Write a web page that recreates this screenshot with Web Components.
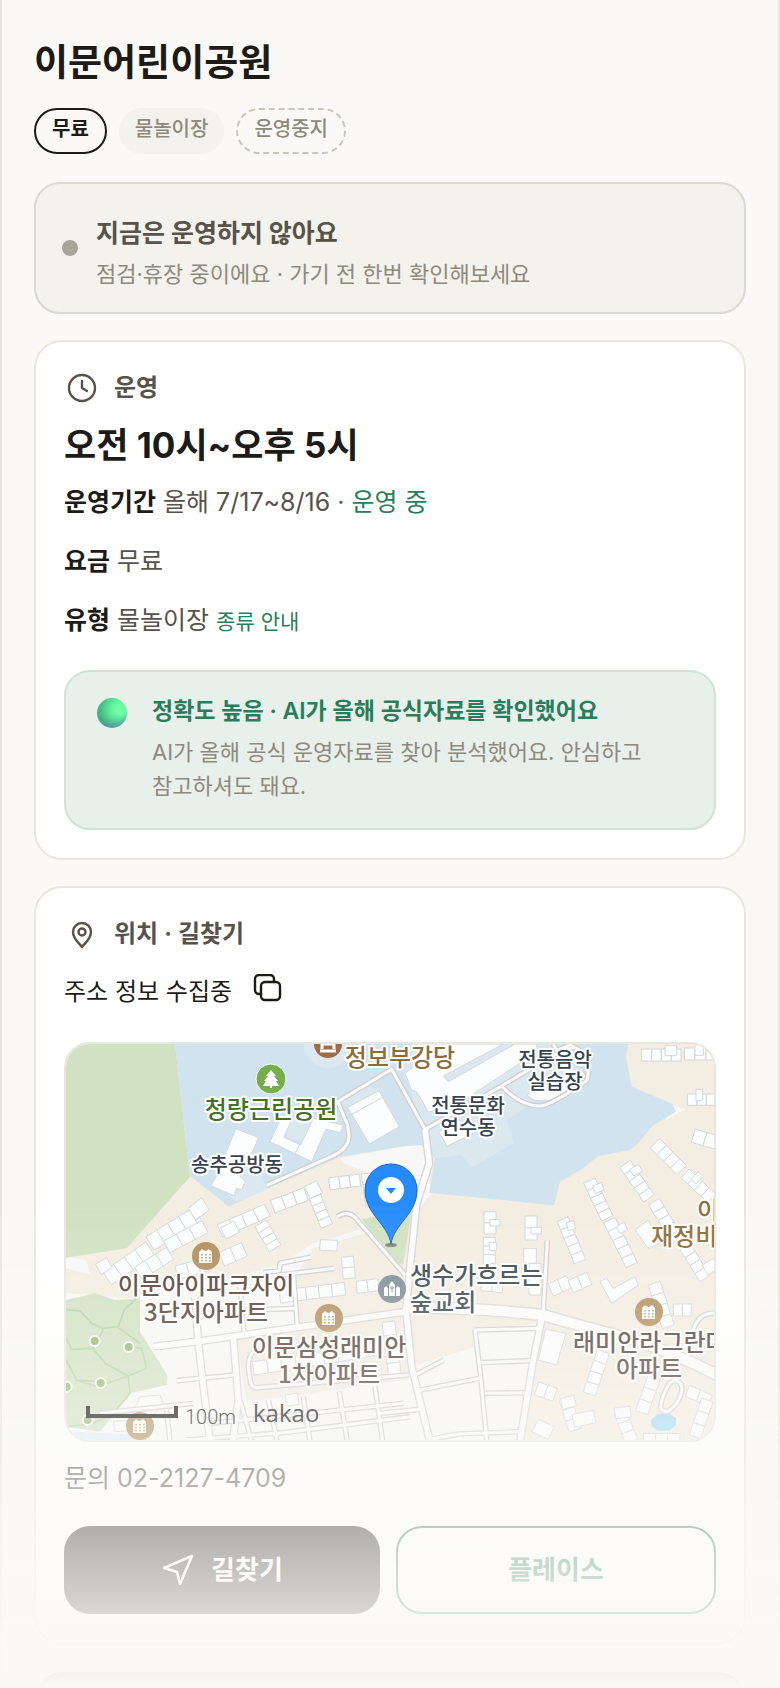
<!DOCTYPE html>
<html lang="ko">
<head>
<meta charset="utf-8">
<meta name="viewport" content="width=device-width, initial-scale=1">
<title>이문어린이공원</title>
<style>
    :root {
        --bg: #faf9f5;
        --ink: #1c1b17;
        --ink-soft: #57534a;
        --ink-mute: #8f897c;
        --line: #e8e6df;
        --green: #2a7d5a;
    }

    body {
        margin: 0;
        background: var(--bg);
        color: var(--ink);
        font-family: Inter, "Noto Sans CJK KR", sans-serif;
        font-size: 24px;
        line-height: 36px;
        word-break: keep-all;
    }
</style>
</head>
<body>
<park-page>
    <h1 slot="title">이문어린이공원</h1>
    <park-chip slot="chips" kind="free">무료</park-chip>
    <park-chip slot="chips">물놀이장</park-chip>
    <park-chip slot="chips" kind="closed">운영중지</park-chip>

    <status-notice>
        <span slot="title">지금은 운영하지 않아요</span>
        점검·휴장 중이에요 · 가기 전 한번 확인해보세요
    </status-notice>

    <info-card icon="clock" heading="운영">
        <hours-info hours="오전 10시~오후 5시">
            <info-row label="운영기간">올해 7/17~8/16 <info-accent>· 운영 중</info-accent></info-row>
            <info-row label="요금">무료</info-row>
            <info-row label="유형">물놀이장 <info-link href="#types">종류 안내</info-link></info-row>
        </hours-info>
        <accuracy-note>
            <span slot="title">정확도 높음 · AI가 올해 공식자료를 확인했어요</span>
            AI가 올해 공식 운영자료를 찾아 분석했어요. 안심하고 참고하셔도 돼요.
        </accuracy-note>
    </info-card>

    <info-card icon="pin" heading="위치 · 길찾기">
        <copy-line>주소 정보 수집중</copy-line>
        <park-map></park-map>
        <contact-line phone="02-2127-4709"></contact-line>
        <route-actions></route-actions>
    </info-card>

    <dark-panel></dark-panel>
</park-page>

<script>
class ParkPage extends HTMLElement {
    constructor() {
        super();
        this.attachShadow({ mode: 'open' });
        this.shadowRoot.innerHTML = `
            <style>
                :host {
                    display: block;
                    box-sizing: border-box;
                    height: 100vh;
                    overflow: hidden;
                    padding: 41px 32px 0;
                    border: solid var(--line);
                    border-width: 0 2px;
                }

                ::slotted(h1) {
                    margin: 0;
                    font-size: 37px;
                    line-height: 44px;
                    font-weight: 700;
                }

                .chips {
                    display: flex;
                    gap: 12px;
                    margin: 23px 0 28px;
                }

                main {
                    display: flex;
                    flex-direction: column;
                    gap: 26px;
                }

                .fade {
                    position: fixed;
                    left: 0;
                    right: 0;
                    bottom: 0;
                    height: 29vh;
                    background: linear-gradient(rgba(250, 249, 245, 0), #faf9f5);
                    pointer-events: none;
                }
            </style>
            <header>
                <slot name="title"></slot>
                <div class="chips"><slot name="chips"></slot></div>
            </header>
            <main><slot></slot></main>
            <div class="fade"></div>
        `;
    }
}

class ParkChip extends HTMLElement {
    constructor() {
        super();
        this.attachShadow({ mode: 'open' });
        this.shadowRoot.innerHTML = `
            <style>
                :host {
                    display: block;
                    box-sizing: border-box;
                    height: 46px;
                    padding: 6px 16px 0;
                    border-radius: 23px;
                    background: #f3f2ed;
                    color: var(--ink-mute);
                    font-size: 20px;
                    line-height: 30px;
                    font-weight: 500;
                }

                :host([kind]) {
                    padding-top: 4px;
                    background: none;
                    border: 2px solid var(--ink);
                }

                :host([kind="free"]) {
                    color: var(--ink);
                    font-weight: 700;
                }

                :host([kind="closed"]) {
                    border: 2px dashed #c9c5b9;
                }
            </style>
            <slot></slot>
        `;
    }
}

class StatusNotice extends HTMLElement {
    constructor() {
        super();
        this.attachShadow({ mode: 'open' });
        this.shadowRoot.innerHTML = `
            <style>
                :host {
                    display: flex;
                    align-items: center;
                    gap: 18px;
                    padding: 0 26px;
                    border: 2px solid #dadad0;
                    border-radius: 26px;
                    background: #f3f2ed;
                }

                i {
                    flex: none;
                    width: 16px;
                    height: 16px;
                    border-radius: 50%;
                    background: #a8a498;
                }

                .text {
                    padding: 31px 0 20px;
                    color: var(--ink-mute);
                    font-size: 22px;
                }

                .title {
                    margin-bottom: 5px;
                    color: var(--ink-soft);
                    font-size: 25px;
                    font-weight: 700;
                }
            </style>
            <i></i>
            <div class="text">
                <div class="title"><slot name="title"></slot></div>
                <slot></slot>
            </div>
        `;
    }
}

const ICONS = {
    clock: '<circle cx="18" cy="18" r="13"/><path d="M18 11v7l5 3"/>',
    pin: '<path d="M18 31c-3-4-9-8-9-15a9 9 0 0 1 18 0c0 7-6 11-9 15z"/><circle cx="18" cy="16" r="3.5"/>'
};

class InfoCard extends HTMLElement {
    constructor() {
        super();
        this.attachShadow({ mode: 'open' });
        this.shadowRoot.innerHTML = `
            <style>
                :host {
                    display: block;
                    padding: 28px;
                    border: 2px solid var(--line);
                    border-radius: 28px;
                    background: #fff;
                }

                h2 {
                    display: flex;
                    gap: 14px;
                    margin: 0;
                    color: var(--ink-soft);
                    font-size: 24px;
                    font-weight: 600;
                }

                svg {
                    width: 36px;
                    height: 36px;
                    fill: none;
                    stroke: currentColor;
                    stroke-width: 2.4;
                    stroke-linecap: round;
                    stroke-linejoin: round;
                }
            </style>
            <h2><svg viewBox="0 0 36 36" aria-hidden="true"></svg><span></span></h2>
            <slot></slot>
        `;
    }

    connectedCallback() {
        this.shadowRoot.querySelector('svg').innerHTML = ICONS[this.getAttribute('icon')];
        this.shadowRoot.querySelector('span').textContent = this.getAttribute('heading');
    }
}

class HoursInfo extends HTMLElement {
    constructor() {
        super();
        this.attachShadow({ mode: 'open' });
        this.shadowRoot.innerHTML = `
            <style>
                :host {
                    display: block;
                }

                p {
                    margin: 17px 0;
                    font-size: 35px;
                    line-height: 44px;
                    font-weight: 700;
                }

                .rows {
                    display: flex;
                    flex-direction: column;
                    gap: 23px;
                }
            </style>
            <p></p>
            <div class="rows"><slot></slot></div>
        `;
    }

    connectedCallback() {
        this.shadowRoot.querySelector('p').textContent = this.getAttribute('hours');
    }
}

class InfoRow extends HTMLElement {
    constructor() {
        super();
        this.attachShadow({ mode: 'open' });
        this.shadowRoot.innerHTML = `
            <style>
                :host {
                    display: block;
                    color: var(--ink-soft);
                    font-size: 25px;
                }

                b {
                    color: var(--ink);
                    font-weight: 600;
                }
            </style>
            <b></b> <slot></slot>
        `;
    }

    connectedCallback() {
        this.shadowRoot.querySelector('b').textContent = this.getAttribute('label');
    }
}

class InfoAccent extends HTMLElement {
    constructor() {
        super();
        this.attachShadow({ mode: 'open' });
        this.shadowRoot.innerHTML = `
            <style>
                :host {
                    color: var(--green);
                }
            </style>
            <slot></slot>
        `;
    }
}

class InfoLink extends HTMLElement {
    constructor() {
        super();
        this.attachShadow({ mode: 'open' });
        this.shadowRoot.innerHTML = `
            <style>
                a {
                    color: var(--green);
                    font-size: 21px;
                    line-height: 30px;
                    text-decoration: none;
                }
            </style>
            <a><slot></slot></a>
        `;
    }

    connectedCallback() {
        this.shadowRoot.querySelector('a').href = this.getAttribute('href');
    }
}

class AccuracyNote extends HTMLElement {
    constructor() {
        super();
        this.attachShadow({ mode: 'open' });
        this.shadowRoot.innerHTML = `
            <style>
                :host {
                    display: flex;
                    gap: 20px;
                    margin-top: 32px;
                    padding: 22px 26px 25px;
                    border: 2px solid #cfe3d8;
                    border-radius: 26px;
                    background: #e8f0eb;
                }

                .orb {
                    flex: none;
                    width: 30px;
                    height: 30px;
                    margin: 4px 5px;
                    border-radius: 50%;
                    background:
                        radial-gradient(circle at 50% -20%, transparent 66%, rgba(90, 130, 190, 0.75) 100%),
                        radial-gradient(circle at 75% 38%, #70ffa4 0 12%, #5cee9a 32%, #48b680 68%, #3fa97a);
                }

                .text {
                    color: var(--ink-mute);
                    font-size: 22px;
                    line-height: 34px;
                }

                .title {
                    margin-bottom: 7px;
                    color: var(--green);
                    font-size: 23px;
                    font-weight: 600;
                }
            </style>
            <div class="orb"></div>
            <div class="text">
                <div class="title"><slot name="title"></slot></div>
                <slot></slot>
            </div>
        `;
    }
}

class CopyLine extends HTMLElement {
    constructor() {
        super();
        this.attachShadow({ mode: 'open' });
        this.shadowRoot.innerHTML = `
            <style>
                :host {
                    display: flex;
                    gap: 20px;
                    margin: 22px 0 32px;
                }

                button {
                    height: 28px;
                    padding: 0;
                    border: 0;
                    background: none;
                    color: var(--ink);
                    cursor: pointer;
                }

                svg {
                    display: block;
                    fill: none;
                    stroke: currentColor;
                    stroke-width: 2.4;
                    stroke-linejoin: round;
                    stroke-linecap: round;
                }
            </style>
            <span><slot></slot></span>
            <button type="button" aria-label="주소 복사">
                <svg width="32" height="28" viewBox="0 0 32 28">
                    <rect x="9" y="8" width="19" height="18" rx="4"/>
                    <path d="M9 20H7a4 4 0 0 1-4-4V5a4 4 0 0 1 4-4h11a4 4 0 0 1 4 4v3"/>
                </svg>
            </button>
        `;
    }
}

class ContactLine extends HTMLElement {
    constructor() {
        super();
        this.attachShadow({ mode: 'open' });
        this.shadowRoot.innerHTML = `
            <style>
                :host {
                    display: block;
                    margin: 18px 0 30px;
                    color: var(--ink-soft);
                    font-size: 25px;
                }

                a {
                    color: inherit;
                    text-decoration: none;
                }
            </style>
            문의 <a></a>
        `;
    }

    connectedCallback() {
        const link = this.shadowRoot.querySelector('a');
        link.textContent = this.getAttribute('phone');
        link.href = 'tel:' + this.getAttribute('phone');
    }
}

class RouteActions extends HTMLElement {
    constructor() {
        super();
        this.attachShadow({ mode: 'open' });
        this.shadowRoot.innerHTML = `
            <style>
                :host {
                    display: flex;
                    gap: 16px;
                }

                button {
                    display: flex;
                    flex: 1;
                    align-items: center;
                    justify-content: center;
                    gap: 16px;
                    height: 88px;
                    padding: 0;
                    border: 0;
                    border-radius: 26px;
                    background: var(--ink);
                    color: #fff;
                    font: 700 26px/36px Inter, "Noto Sans CJK KR", sans-serif;
                    cursor: pointer;
                }

                .place {
                    border: 2px solid var(--green);
                    background: none;
                    color: var(--green);
                }

                svg {
                    fill: none;
                    stroke: currentColor;
                    stroke-width: 2.6;
                    stroke-linejoin: round;
                }
            </style>
            <button type="button">
                <svg width="34" height="34" viewBox="0 0 34 34" aria-hidden="true"><path d="M31 3L3 15l13 4 3 12z"/></svg>
                길찾기
            </button>
            <button type="button" class="place">플레이스</button>
        `;
    }
}

class DarkPanel extends HTMLElement {
    constructor() {
        super();
        this.attachShadow({ mode: 'open' });
        this.shadowRoot.innerHTML = `
            <style>
                :host {
                    display: block;
                    flex: none;
                    height: 160px;
                    margin-top: 2px;
                    border-radius: 28px;
                    background: var(--ink);
                }
            </style>
        `;
    }
}

// rows of houses: x1, y1, x2, y2, depth, number of houses
const HOUSES = [
    [172, 745, 300, 655, 46, 4], [300, 640, 430, 560, 46, 4], [265, 730, 360, 670, 42, 3], [350, 650, 465, 590, 40, 3],
    [510, 602, 618, 556, 40, 3], [632, 580, 675, 655, 40, 4], [618, 556, 652, 540, 40, 1], [668, 530, 768, 492, 40, 3],
    [772, 488, 808, 470, 40, 1], [795, 500, 830, 588, 36, 4], [838, 462, 930, 450, 36, 3], [952, 430, 965, 525, 36, 3],
    [515, 688, 583, 658, 44, 2], [520, 610, 560, 590, 38, 1], [380, 728, 480, 700, 40, 3], [690, 800, 885, 776, 38, 5],
    [892, 680, 898, 745, 36, 2], [920, 772, 985, 764, 36, 2], [810, 645, 862, 647, 32, 1], [1015, 875, 1035, 1040, 38, 4],
    [610, 1015, 780, 990, 40, 4], [780, 990, 990, 955, 38, 5], [708, 1112, 745, 1106, 34, 1], [145, 718, 178, 698, 34, 1],
    [1775, 75, 1893, 75, 36, 4], [1845, 62, 1880, 62, 30, 1], [1903, 72, 2000, 72, 36, 3], [1935, 60, 1960, 60, 32, 1],
    [1912, 209, 1998, 209, 34, 3], [1938, 195, 1958, 195, 34, 1], [1930, 317, 2000, 338, 40, 2], [1815, 340, 1895, 420, 40, 4],
    [1725, 402, 1797, 505, 38, 5], [1745, 428, 1772, 413, 24, 1], [1905, 430, 1985, 505, 36, 4], [1930, 455, 1952, 432, 20, 1],
    [1618, 452, 1672, 565, 38, 5], [1632, 480, 1658, 468, 24, 1], [1812, 515, 1870, 610, 38, 4], [1678, 570, 1745, 705, 38, 5],
    [1704, 600, 1728, 588, 24, 1], [1320, 545, 1320, 612, 36, 2], [1320, 578, 1350, 578, 20, 1], [1443, 558, 1443, 630, 36, 2],
    [1443, 602, 1474, 602, 20, 1], [1538, 568, 1590, 695, 36, 5], [1552, 590, 1574, 584, 24, 1], [1318, 622, 1318, 700, 36, 3],
    [1318, 650, 1340, 650, 24, 1], [1440, 655, 1440, 700, 38, 1], [1455, 700, 1455, 795, 36, 3], [1295, 765, 1358, 772, 34, 2],
    [1502, 780, 1558, 755, 40, 2], [1562, 770, 1618, 745, 40, 2], [1905, 650, 1965, 745, 36, 4], [1965, 720, 1998, 700, 34, 1],
    [1812, 760, 1855, 890, 38, 4], [1870, 840, 1924, 840, 36, 2], [1660, 965, 1618, 1092, 38, 4], [1812, 1042, 1775, 1148, 38, 3],
    [1912, 1082, 1980, 1112, 36, 2], [1972, 1110, 1935, 1220, 36, 3], [1460, 1075, 1515, 1095, 40, 2], [1545, 1105, 1575, 1200, 38, 3],
    [1570, 1172, 1634, 1160, 38, 1], [1535, 1122, 1575, 1112, 34, 1], [1710, 1145, 1745, 1235, 38, 3], [1695, 1150, 1742, 1145, 32, 1],
    [1780, 1225, 1890, 1225, 30, 3]
];

function houseRow([x1, y1, x2, y2, depth, n]) {
    const len = Math.hypot(x2 - x1, y2 - y1);
    const nx = -(y2 - y1) / len * depth / 2;
    const ny = (x2 - x1) / len * depth / 2;
    let out = '';
    for (let i = 0; i < n; i++) {
        const ax = x1 + (x2 - x1) * i / n;
        const ay = y1 + (y2 - y1) * i / n;
        const bx = x1 + (x2 - x1) * (i + 1) / n;
        const by = y1 + (y2 - y1) * (i + 1) / n;
        const pts = [ax + nx, ay + ny, bx + nx, by + ny, bx - nx, by - ny, ax - nx, ay - ny];
        out += `<polygon points="${pts.map(Math.round).join(' ')}"/>`;
    }
    return out;
}

// apartment badge, centred on x, y
function aptBadge(x, y) {
    return `<g transform="translate(${x} ${y})">
        <circle r="14" fill="#b18c59"/>
        <path d="M-7-4l3-3 3 2 1 0 3-2 3 3V7H-7z" fill="#fff"/>
        <path d="M-4-2v8M0-2v8M4-2v8" stroke="#b18c59" stroke-width="1.5" stroke-dasharray="1.5 1.5"/>
    </g>`;
}

class ParkMap extends HTMLElement {
    constructor() {
        super();
        this.attachShadow({ mode: 'open' });
        this.shadowRoot.innerHTML = `
            <style>
                :host {
                    display: block;
                    overflow: hidden;
                    border: 2px solid var(--line);
                    border-radius: 26px;
                }

                svg {
                    display: block;
                    width: 100%;
                    height: 396px;
                    background: #f4ede1;
                }

                text {
                    font-family: "Noto Sans CJK KR", sans-serif;
                    font-size: 24px;
                    font-weight: 500;
                    fill: #4c382d;
                    stroke: #fff;
                    stroke-width: 4;
                    stroke-linejoin: round;
                    paint-order: stroke;
                }

                .mid { text-anchor: middle; }
                .small { font-size: 20px; fill: #36434e; }
                .park { fill: #457022; }
                .hall { fill: #8b6d38; }
                .church { fill: #32404b; }
                .scale { font: 300 20px Roboto, sans-serif; fill: #000; stroke: none; }
                .brand { font: 500 24px "Open Sans", sans-serif; fill: #000; stroke: none; }
            </style>
            <svg viewBox="0 0 648 396" preserveAspectRatio="xMidYMid slice" role="img" aria-label="이문어린이공원 지도">
                <defs>
                    <g id="thin" fill="none" stroke-linejoin="round">
                        <path d="M650 466L850 377Q895 355 897 320L893 285 863 215 1025 118 1125 298 1355 168 1500 80 1575 50M1025 118L980 145"/>
                        <path d="M1355 168Q1410 228 1470 228 1505 225 1610 152 1625 120 1590 62L1560 45 1520 62 1510 42"/>
                        <path d="M862 560Q890 540 915 562L1065 735"/>
                        <path d="M1492 632L1480 840"/>
                        <path d="M620 960Q590 975 596 1020L602 1060Q610 1078 635 1072L1075 1035"/>
                        <path d="M560 842L740 835M640 728L688 722 690 700 782 682M692 735L852 715M730 725L742 890M570 770L582 905"/>
                        <path d="M380 1052L555 1035M150 1150L430 1120M480 1180L760 1152 1060 1120M410 1230L700 1208 1080 1160"/>
                        <path d="M572 1115L605 1235M655 1110L682 1235M760 1100L780 1235M868 1085L892 1235M975 1070L998 1235M350 1140L360 1235"/>
                        <path d="M1095 1035L1182 990M1100 1082L1290 1045M1275 900L1465 895M1290 998L1440 992M1305 1090L1430 1088M990 1150L1110 1138M1140 1228L1225 1212 1410 1205"/>
                        <path d="M1275 900L1292 1040 1310 1230"/>
                        <path d="M1858 1060Q1830 1110 1832 1135 1850 1160 1880 1120 1905 1080 1890 1058 1875 1045 1858 1060zM1930 900Q1945 850 1990 850"/>
                    </g>
                    <g id="wide" fill="none" stroke-linejoin="round">
                        <path d="M1125 298L1138 400 1100 520 1078 730 1068 840 1085 1010 1140 1235"/>
                        <path d="M310 950L440 935 720 895 1068 845"/>
                        <path d="M435 800L445 940 480 1235M550 925L565 1110 548 1235"/>
                        <path d="M1475 865L1448 1000 1410 1235"/>
                    </g>
                    <path id="main" fill="none" d="M1068 832Q1300 835 1480 855 1650 905 1740 925 1890 975 2010 1040"/>
                </defs>
                <g transform="scale(.33333333) translate(-48 -42)">
                    <path fill="#f8f8f8" d="M870 385L1115 340 1145 490 1085 560 1000 540 960 430 880 400zM1860 222l47 17-60 30zM48 680l60 10 15 45-75-20zM240 805L400 760 560 740 700 700 790 640 960 590 960 605 790 655 740 730 750 900 560 930 590 1115 1070 1050 1085 1010 1180 980 1280 950 1275 900 1475 880 1410 1240 48 1240 48 790z"/>
                    <path fill="#f4ede1" d="M560 920L1070 850 1080 1045 592 1112z"/>
                    <path fill="#d0e2c1" d="M48 42H375L420 440 230 655 48 683zM935 568L1085 540 1060 702 1040 700zM48 810L135 790 195 810 270 805V905L352 1035 350 1065 240 1090 150 1205 48 1190z"/>
                    <path fill="#d1e3ef" d="M375 42H1735L1728 80 1745 170 1868 222 1878 245 1808 287 1765 340 1740 360 1645 378 1600 415 1530 455 1512 526 1138 488 1155 385 1115 345 1050 350 870 380 640 480 537 530 420 437z"/>
                    <path fill="#dbe8f0" d="M1155 385L1235 375 1265 412 1392 340 1370 270 1480 200 1610 150 1520 42 1085 42 1060 130 1130 310zM582 400L630 420 650 480 560 515 530 490zM720 270H800L760 335 710 320zM860 215L940 165 1000 180 900 235z"/>
                    <circle cx="834" cy="42" r="72" fill="#dbe8f0"/>
                    <path fill="#9fd8f2" d="M1802 1170l22-18 30-2 24 14v22l-20 16h-34l-20-14z"/>
                    <path fill="#e0eef9" d="M70 1205L300 1215V1235H70z"/>
                    <g fill="none" stroke="#b4d0a3" stroke-width="5">
                        <path d="M48 840L90 842 125 880 160 895 200 890 270 940M160 895L145 930 128 955 65 958 48 925M205 890L222 840 260 805M128 955L165 1000 235 1038 290 1015 275 955 235 950M48 990L80 1050 140 1070 235 1038 240 1090 190 1150 130 1180 48 1190M80 1050L150 1055"/>
                    </g>
                    <g fill="#94b76a" stroke="#fff" stroke-width="6">
                        <circle cx="134" cy="933" r="15"/><circle cx="236" cy="951" r="15"/>
                        <circle cx="152" cy="1059" r="15"/><circle cx="50" cy="1070" r="15"/><circle cx="113" cy="1170" r="15"/>
                    </g>
                    <g fill="#fcfdfe" stroke="#d3d7da" stroke-width="3">
                        <path d="M558 296L626 323 602 375 570 440 587 452 575 480 560 475 552 497 482 467 510 420 535 350z"/>
                        <path d="M690 270H725L702 322 752 345 790 265 880 285 872 308 828 298 785 395 660 335zM735 370L750 342"/>
                        <path d="M893 232L987 182 1048 290 958 342zM905 253L997 203"/>
                        <path d="M1065 130L1108 95 1100 42H1360L1180 138 1195 155 1395 42H1460L1462 65 1190 245H1135L1100 185 1085 180z"/>
                        <path d="M1165 305L1225 270 1290 300 1192 348zM1430 195L1450 180 1595 115 1608 140 1540 190 1500 210 1455 212z"/>
                        <path d="M1487 897L1548 910 1520 1005 1465 990zM1650 755L1670 745 1690 775 1755 740 1765 765 1685 820zM415 535L455 503 478 540 437 570zM1465 1168L1512 1190 1495 1228 1445 1205zM435 570L448 560 472 605 460 610zM1755 600L1795 570 1830 640 1795 655zM190 1175L240 1170 270 1100 330 1095 340 1120 270 1200 195 1205z"/>
                        ${HOUSES.map(houseRow).join('')}
                    </g>
                    <use href="#thin" stroke="#d0d0d0" stroke-width="17"/>
                    <use href="#wide" stroke="#d6d6d6" stroke-width="25"/>
                    <use href="#main" stroke="#dcdad7" stroke-width="39"/>
                    <use href="#thin" stroke="#fbfbfb" stroke-width="9"/>
                    <use href="#wide" stroke="#fcfcfc" stroke-width="17"/>
                    <use href="#main" stroke="#fdfdfc" stroke-width="30"/>
                </g>

                <circle cx="262" cy="0" r="14" fill="#9c6c48"/>
                <path d="M254 7h16M256 5V0h12v5M260-3h5" stroke="#fff" stroke-width="3" fill="none"/>
                <circle cx="205" cy="35" r="15" fill="#74af4c" stroke="#fff"/>
                <path d="M205 26l5 6h-2l4 5h-2l3 5h-7v2h-2v-2h-7l3-5h-2l4-5h-2z" fill="#fff"/>
                <circle cx="326" cy="245" r="14" fill="#7b8c94"/>
                <path d="M318 252v-8l2-2 2 2v8zM330 252v-8l2-2 2 2v8zM323 252v-11l3-4 3 4v11z" fill="#fff"/>
                <path d="M326 242v6M324 244h4" stroke="#7b8c94"/>
                ${aptBadge(140, 212)}${aptBadge(263, 274)}${aptBadge(583, 268)}${aptBadge(74, 382)}

                <text class="mid hall" x="334" y="22">정보부강당</text>
                <text class="mid park" x="205" y="74">청량근린공원</text>
                <text class="mid small" x="171" y="128">송추공방동</text>
                <text class="mid small" x="489" y="23">전통음악</text>
                <text class="mid small" x="489" y="45">실습장</text>
                <text class="mid small" x="402" y="69">전통문화</text>
                <text class="mid small" x="402" y="91">연수동</text>
                <text class="hall" x="631" y="175">이</text>
                <text class="hall" x="585" y="201">재정비</text>
                <text class="mid" x="140" y="250">이문아이파크자이</text>
                <text class="mid" x="140" y="277">3단지아파트</text>
                <text class="mid" x="263" y="312">이문삼성래미안</text>
                <text class="mid" x="263" y="339">1차아파트</text>
                <text class="church" x="344" y="240">생수가흐르는</text>
                <text class="church" x="344" y="267">숲교회</text>
                <text x="507" y="307">래미안라그란데</text>
                <text class="mid" x="583" y="333">아파트</text>

                <ellipse cx="325" cy="201" rx="6" ry="2" fill="#53605a" opacity=".7"/>
                <path d="M325 200C322 180 299 170 299 146a26 26 0 0 1 52 0c0 24-23 34-26 54z" fill="#258bfa" stroke="#1b61bd"/>
                <circle cx="325" cy="146" r="13" fill="#fff"/>
                <path d="M320 144h10l-5 6z" fill="#258bfa"/>

                <path d="M22 362v10h88v-10" fill="none" stroke="#000" stroke-width="4"/>
                <text class="scale" x="119" y="380">100m</text>
                <text class="brand" x="187" y="378">kakao</text>
            </svg>
        `;
    }
}

customElements.define('park-page', ParkPage);
customElements.define('park-chip', ParkChip);
customElements.define('status-notice', StatusNotice);
customElements.define('info-card', InfoCard);
customElements.define('hours-info', HoursInfo);
customElements.define('info-row', InfoRow);
customElements.define('info-accent', InfoAccent);
customElements.define('info-link', InfoLink);
customElements.define('accuracy-note', AccuracyNote);
customElements.define('copy-line', CopyLine);
customElements.define('contact-line', ContactLine);
customElements.define('route-actions', RouteActions);
customElements.define('dark-panel', DarkPanel);
customElements.define('park-map', ParkMap);
</script>
</body>
</html>
